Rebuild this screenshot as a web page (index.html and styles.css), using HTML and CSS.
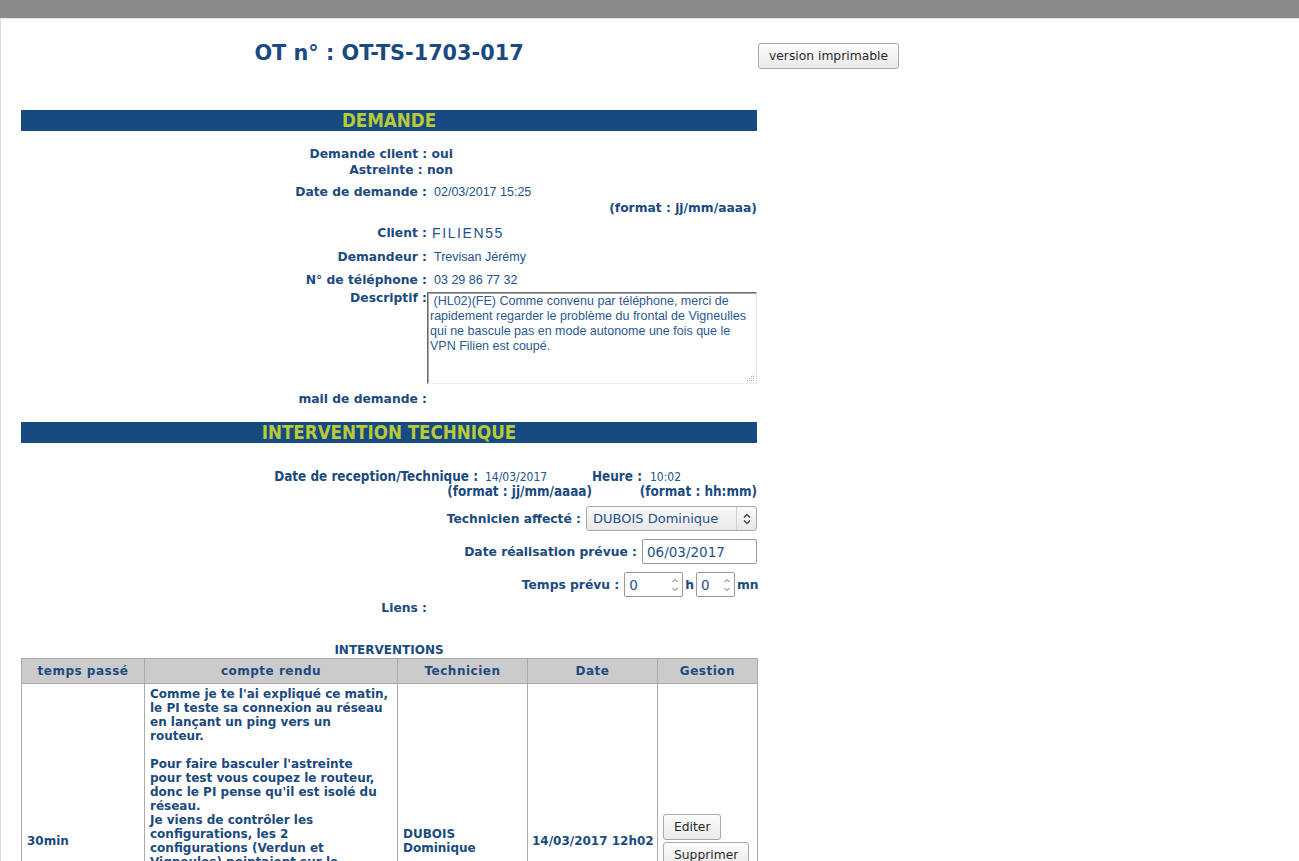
FILE: index.html
```html
<!DOCTYPE html>
<html lang="fr">
<head>
<meta charset="utf-8">
<title>OT n° : OT-TS-1703-017</title>
<link rel="stylesheet" href="styles.css">
</head>
<body>
<div class="topbar"></div>
<div class="page">
  <div class="header">
    <h1 class="title">OT n° : OT-TS-1703-017</h1>
    <button class="btn btn-print" type="button">version imprimable</button>
  </div>

  <div class="bar">DEMANDE</div>
  <div class="flags">
    <div>Demande client : oui</div>
    <div>Astreinte : non</div>
  </div>
  <div class="row r-date"><span class="lbl">Date de demande :</span><span class="val">02/03/2017 15:25</span></div>
  <div class="fmt">(format : jj/mm/aaaa)</div>
  <div class="row r-client"><span class="lbl">Client :</span><span class="val val-client">FILIEN55</span></div>
  <div class="row r-dem"><span class="lbl">Demandeur :</span><span class="val">Trevisan Jérémy</span></div>
  <div class="row r-tel"><span class="lbl">N° de téléphone :</span><span class="val">03 29 86 77 32</span></div>
  <div class="row r-desc"><span class="lbl lbl-desc">Descriptif :</span><div class="desc-wrap"><textarea class="desc" readonly> (HL02)(FE) Comme convenu par téléphone, merci de rapidement regarder le problème du frontal de Vigneulles qui ne bascule pas en mode autonome une fois que le VPN Filien est coupé.</textarea><svg class="grip" width="9" height="9" viewBox="0 0 9 9"><g fill="#b0b0b0"><rect x="7" y="1" width="1" height="1"/><rect x="5" y="3" width="1" height="1"/><rect x="7" y="3" width="1" height="1"/><rect x="3" y="5" width="1" height="1"/><rect x="5" y="5" width="1" height="1"/><rect x="7" y="5" width="1" height="1"/><rect x="1" y="7" width="1" height="1"/><rect x="3" y="7" width="1" height="1"/><rect x="5" y="7" width="1" height="1"/><rect x="7" y="7" width="1" height="1"/></g></svg></div></div>
  <div class="row r-mail"><span class="lbl">mail de demande :</span></div>

  <div class="bar bar-int">INTERVENTION TECHNIQUE</div>
  <div class="recep">
    <span class="c-lbl">Date de reception/Technique :</span>
    <span class="c-val">14/03/2017</span>
    <span class="c-lbl2">Heure :</span>
    <span class="c-val c-val2">10:02</span>
    <span class="c-fmt c-fmt1">(format : jj/mm/aaaa)</span>
    <span class="c-fmt c-fmt2">(format : hh:mm)</span>
  </div>

  <div class="frow r-tech">
    <span class="flbl">Technicien affecté :</span>
    <div class="select">
      <span class="select-text">DUBOIS Dominique</span>
      <span class="select-arrow"><svg width="8" height="12" viewBox="0 0 8 12"><path d="M1 4.5 L4 1.5 L7 4.5 M1 7.5 L4 10.5 L7 7.5" fill="none" stroke="#333" stroke-width="1.2"/></svg></span>
    </div>
  </div>
  <div class="frow r-real">
    <span class="flbl">Date réalisation prévue :</span>
    <div class="input input-date">06/03/2017</div>
  </div>
  <div class="frow r-temps">
    <span class="flbl">Temps prévu :</span>
    <div class="input input-num num-h"><span>0</span><svg class="spin" width="8" height="16" viewBox="0 0 8 16"><path d="M1.5 5 L4 2.5 L6.5 5 M1.5 11 L4 13.5 L6.5 11" fill="none" stroke="#666" stroke-width="1"/></svg></div>
    <span class="unit">h</span>
    <div class="input input-num num-m"><span>0</span><svg class="spin" width="8" height="16" viewBox="0 0 8 16"><path d="M1.5 5 L4 2.5 L6.5 5 M1.5 11 L4 13.5 L6.5 11" fill="none" stroke="#666" stroke-width="1"/></svg></div>
    <span class="unit unit-last">mn</span>
  </div>
  <div class="row r-liens"><span class="lbl">Liens :</span></div>

  <div class="caption">INTERVENTIONS</div>
  <table class="interv">
    <colgroup>
      <col class="w1"><col class="w2"><col class="w3"><col class="w4"><col class="w5">
    </colgroup>
    <thead>
      <tr><th>temps passé</th><th>compte rendu</th><th>Technicien</th><th>Date</th><th>Gestion</th></tr>
    </thead>
    <tbody>
      <tr>
        <td>30min</td>
        <td class="cr">Comme je te l'ai expliqué ce matin,<br>le PI teste sa connexion au réseau<br>en lançant un ping vers un<br>routeur.<br><br>Pour faire basculer l'astreinte<br>pour test vous coupez le routeur,<br>donc le PI pense qu'il est isolé du<br>réseau.<br>Je viens de contrôler les<br>configurations, les 2<br>configurations (Verdun et<br>Vigneules) pointaient sur le<br>même routeur (Verdun). Donc<br>quand vous coupez le routeur,<br>les 2 PI basculent en<br>astreinte.<br><br>J'ai modifié la configuration<br>de Vigneulles pour qu'elle<br>pointe sur son propre<br>routeur.</td>
        <td>DUBOIS<br>Dominique</td>
        <td class="nowrap">14/03/2017 12h02</td>
        <td class="gestion"><button class="btn btn-small" type="button">Editer</button><br><button class="btn btn-small" type="button">Supprimer</button></td>
      </tr>
    </tbody>
  </table>
</div>
</body>
</html>
```

FILE: styles.css
```css
html, body {
  margin: 0;
  padding: 0;
  background: #ffffff;
}
body {
  font-family: "DejaVu Sans", Verdana, sans-serif;
  color: #1b4a80;
}
.topbar {
  height: 18px;
  background: #8a8a8a;
  border-bottom: 1px solid #e6e6e6;
}
.page {
  border-left: 1px solid #dcdcdc;
  padding-left: 20px;
  min-height: 900px;
}
.header {
  display: flex;
  align-items: flex-start;
  height: 91px;
}
.title {
  width: 736px;
  margin: 21px 0 0 0;
  text-align: center;
  font-size: 20.8px;
  line-height: 26px;
  font-weight: bold;
  color: #1b4a80;
}
.btn {
  font-family: "DejaVu Sans", sans-serif;
  font-size: 12.3px;
  color: #2a2a2a;
  background: linear-gradient(#fdfdfd, #e9e9e9);
  border: 1px solid #a9a9a9;
  border-radius: 3px;
  height: 26px;
  padding: 0 10px;
  margin: 0;
}
.btn-print {
  margin-top: 24px;
  margin-left: 1px;
  width: 141px;
}
.bar {
  width: 736px;
  height: 21px;
  line-height: 22px;
  background: #164a80;
  color: #b9c93b;
  text-align: center;
  font-family: "DejaVu Sans Condensed", "DejaVu Sans", sans-serif;
  font-weight: bold;
  font-size: 18.6px;
}
.flags {
  width: 432px;
  margin-top: 15px;
  text-align: right;
  font-weight: bold;
  font-size: 12.3px;
  line-height: 16px;
}
.row {
  display: flex;
  align-items: center;
  height: 16px;
}
.lbl {
  flex: none;
  width: 406px;
  text-align: right;
  font-weight: bold;
  font-size: 12.3px;
  line-height: 16px;
}
.val {
  padding-left: 7px;
  font-family: "Liberation Sans", Arial, sans-serif;
  font-size: 12.5px;
  color: #21528b;
}
.val-client {
  font-size: 14px;
  letter-spacing: 1.6px;
  padding-left: 5px;
}
.r-date { margin-top: 6px; }
.fmt {
  width: 736px;
  text-align: right;
  font-weight: bold;
  font-size: 12.3px;
  line-height: 16px;
}
.r-client { margin-top: 9px; }
.r-dem { margin-top: 8px; }
.r-tel { margin-top: 7px; }
.r-desc {
  margin-top: 4px;
  height: auto;
  align-items: flex-start;
}
.lbl-desc {
  line-height: 12px;
}
.desc-wrap {
  position: relative;
  width: 330px;
  height: 92px;
}
.desc {
  display: block;
  box-sizing: border-box;
  width: 330px;
  height: 92px;
  margin: 0;
  padding: 1px 2px;
  border: 1px solid;
  border-color: #6a6a6a #e4e4e4 #eeeeee #6a6a6a;
  box-shadow: inset 1px 1px 0 #a8a8a8;
  font-family: "Liberation Sans", Arial, sans-serif;
  font-size: 12.5px;
  line-height: 15px;
  color: #2a5a93;
  resize: none;
  outline: none;
  overflow: hidden;
  background: #fff;
}
.grip {
  position: absolute;
  right: 2px;
  bottom: 2px;
}
.r-mail { margin-top: 7px; }
.bar-int { margin-top: 15px; }

.recep {
  display: grid;
  grid-template-columns: 457px 114px 53px 112px;
  grid-template-rows: 16px 14px;
  margin-top: 26px;
  font-family: "DejaVu Sans Condensed", "DejaVu Sans", sans-serif;
  font-weight: bold;
  font-size: 13.4px;
  line-height: 16px;
  align-items: center;
}
.c-lbl { text-align: right; white-space: nowrap; }
.c-lbl2 { white-space: nowrap; }
.c-val {
  padding-left: 7px;
  font-weight: normal;
  font-size: 12px;
  color: #21528b;
}
.c-val2 { padding-left: 5px; }
.c-fmt {
  text-align: right;
  line-height: 14px;
  white-space: nowrap;
}
.c-fmt1 { grid-column: 1 / 3; }
.c-fmt2 { grid-column: 3 / 5; }

.frow {
  width: 736px;
  display: flex;
  justify-content: flex-end;
  align-items: center;
  height: 25px;
  margin-top: 8px;
}
.r-tech { margin-top: 7px; }
.flbl {
  font-weight: bold;
  font-size: 12.3px;
  margin-right: 5px;
  white-space: nowrap;
}
.select {
  box-sizing: border-box;
  width: 171px;
  height: 25px;
  display: flex;
  align-items: center;
  border: 1px solid #a9a9a9;
  border-radius: 3px;
  background: linear-gradient(#fafafa, #e8e8e8);
}
.select-text {
  flex: 1;
  padding-left: 6px;
  font-size: 13px;
  color: #21528b;
}
.select-arrow {
  width: 19px;
  height: 23px;
  border-left: 1px solid #cfcfcf;
  display: flex;
  align-items: center;
  justify-content: center;
}
.input {
  box-sizing: border-box;
  height: 25px;
  border: 1px solid #9a9a9a;
  border-radius: 2px;
  background: #fff;
  font-size: 13.5px;
  color: #21528b;
  display: flex;
  align-items: center;
  padding-left: 4px;
}
.input-date { width: 115px; }
.input-num {
  justify-content: space-between;
  padding-right: 3px;
}
.num-h { width: 59px; }
.num-m { width: 39px; }
.unit {
  font-weight: bold;
  font-size: 12.3px;
  padding: 0 2px;
}
.unit-last { padding-right: 0; width: 20px; }
.r-liens { margin-top: 3px; }

.caption {
  width: 736px;
  text-align: center;
  margin-top: 27px;
  font-weight: bold;
  font-size: 12px;
  line-height: 15px;
}
.interv {
  width: 736px;
  border-collapse: collapse;
  table-layout: fixed;
  border: 1px solid #ababab;
  font-size: 12px;
  font-weight: bold;
  color: #1b4a80;
}
.w1 { width: 123px; }
.w2 { width: 253px; }
.w3 { width: 130px; }
.w4 { width: 130px; }
.w5 { width: 100px; }
.interv th {
  height: 24px;
  padding: 0;
  background: #cbcbcb;
  border: 1px solid #ababab;
  letter-spacing: 0.5px;
  font-weight: bold;
}
.interv td {
  border: 1px solid #ababab;
  padding: 3px 5px 0 5px;
  vertical-align: middle;
  line-height: 14px;
}
.interv td.cr {
  vertical-align: top;
  white-space: nowrap;
}
.interv td.nowrap {
  white-space: nowrap;
  padding-left: 4px;
}
.gestion {
  line-height: 0;
}
.btn-small {
  margin: 1px 0;
}
```
